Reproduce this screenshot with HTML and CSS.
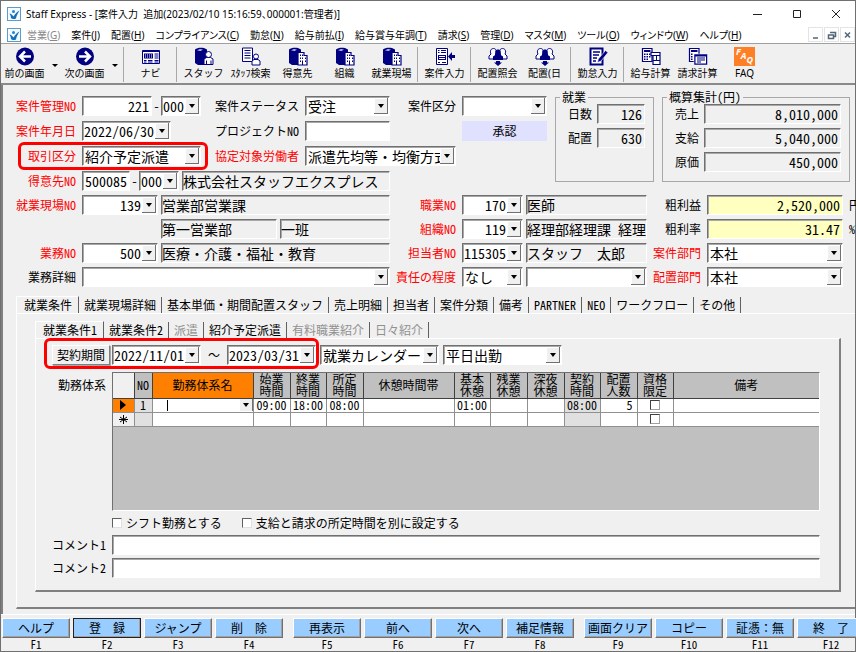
FILE: index.html
```html
<!DOCTYPE html>
<html lang="ja">
<head>
<meta charset="utf-8">
<title>Staff Express</title>
<link rel="stylesheet" href="styles.css">
</head>
<body>
<svg class="defs" aria-hidden="true">
  <symbol id="logo" viewBox="0 0 14 14"><rect x=".5" y=".5" width="13" height="13" fill="#f4fafe" stroke="#5a9ccc"/><path d="M2.500 6.500C4 6.500 5.500 8 6.500 9.500 8 7 9.500 5 12.500 3.500 10.500 6.500 9.500 9 9 11.500 7 12.500 5 12 4 11 4 9.500 3.500 8 2.500 6.500z" fill="#1470b8"/><circle cx="6.500" cy="4.500" r="1.500" fill="#1f86cf"/></symbol>
  <symbol id="book" viewBox="0 0 20 19"><path d="M1 2.500C3 .5 7 .3 10 1l3 1.500V18H4L1 16z"/><path d="M3 3.300 6 2.300 9 2.800 6.500 3.800z" fill="#fff"/></symbol>
  <symbol id="building" viewBox="0 0 20 19"><use href="#book"/><path d="M10 5.500h6v3h3v9.500H10z" fill="#fff" stroke="#000080" stroke-width="1.200"/><path d="M12 7.500h1v1.500h-1zm2 0h1v1.500h-1zm-2 3h1v1.500h-1zm2 0h1v1.500h-1zm-2 3h1v1.500h-1zm2 0h1V18h-1zM17 10.500h1v1.500h-1zm0 3h1v1.500h-1z"/></symbol>
  <symbol id="group" viewBox="0 0 20 19"><g fill="#fff" stroke="#000080"><path d="M1 12V9l2-2C1.500 4 3 1.500 5.500 1.500S9 4 7.500 7v5zM19 12V9l-2-2c1.500-3 0-5.500-2.500-5.500S11 4 12.500 7v5z"/></g><path d="M5 13V9.500l3-2C6.500 5 7.500 2.500 10 2.500S13.500 5 12 7.500l3 2V13zM8 14h4v1.500h2L10 19l-4-3.500h2z"/></symbol>
</svg>
<div class="window">
  <header class="titlebar">
    <svg class="logo"><use href="#logo"/></svg>
    <h1>Staff Express - [案件入力&nbsp; 追加(2023/02/10 15:16:59、000001:管理者)]</h1>
    <div class="winbtns">
      <button aria-label="最小化"><svg viewBox="0 0 10 10"><path d="M0 5.500h9"/></svg></button>
      <button aria-label="最大化"><svg viewBox="0 0 10 10"><path d="M1.500 1.500h7v7h-7z"/></svg></button>
      <button aria-label="閉じる"><svg viewBox="0 0 10 10"><path d="M1 1l8 8M9 1l-8 8"/></svg></button>
    </div>
  </header>
  <nav class="menubar">
    <svg class="logo"><use href="#logo"/></svg>
    <a href="#" class="off">営業(<u>G</u>)</a><a href="#">案件(<u>J</u>)</a><a href="#">配置(<u>H</u>)</a><a href="#">コンプライアンス(<u>C</u>)</a><a href="#">勤怠(<u>N</u>)</a><a href="#">給与前払(<u>I</u>)</a><a href="#">給与賞与年調(<u>T</u>)</a><a href="#">請求(<u>S</u>)</a><a href="#">管理(<u>D</u>)</a><a href="#">マスタ(<u>M</u>)</a><a href="#">ツール(<u>O</u>)</a><a href="#">ウィンドウ(<u>W</u>)</a><a href="#">ヘルプ(<u>H</u>)</a>
    <div class="mdi">
      <button aria-label="子画面を最小化"><svg viewBox="0 0 10 10"><path d="M2 8h5"/></svg></button>
      <button aria-label="子画面を元に戻す"><svg viewBox="0 0 10 10"><path d="M3 2.500h5.500v4H7M1.500 5h5v3.500h-5z"/></svg></button>
      <button aria-label="子画面を閉じる"><svg viewBox="0 0 10 10"><path d="M2 2.500l5 5M7 2.500l-5 5"/></svg></button>
    </div>
  </nav>
  <div class="toolbar">
    <button class="tool"><svg viewBox="0 0 20 19"><circle cx="10" cy="9.500" r="9"/><path class="w" d="M10 4.500l-5 5 5 5M5.500 9.500H16"/></svg>前の画面</button>
    <button class="more" aria-label="前の画面の履歴"></button>
    <button class="tool"><svg viewBox="0 0 20 19"><circle cx="10" cy="9.500" r="9"/><path class="w" d="M10 4.500l5 5-5 5M14.500 9.500H4"/></svg>次の画面</button>
    <button class="more" aria-label="次の画面の履歴"></button>
    <i class="sep"></i>
    <button class="tool"><svg viewBox="0 0 20 19"><path d="M1.500 3.500h17v13h-17z" fill="#fff" stroke="#000080"/><path d="M2 4h16v1H2z"/><path d="M3 6.500h9v5H3z"/><path d="M4 8h7M4 10h7" stroke="#fff" stroke-dasharray="1 1"/><path d="M13.500 7h4M13.500 9h4M13.500 11h4M3 13.500h2.500M7 13.500h4.500M13.500 13.500h4M3 15h2.500M7 15h4.500M13.500 15h4" stroke="#000080"/></svg>ナビ</button>
    <i class="sep"></i>
    <button class="tool"><svg viewBox="0 0 20 19"><use href="#book"/><g fill="#fff" stroke="#000080"><path d="M10 17.500V12l2.500-1.500h4L19 12v5.500z"/><circle cx="14.500" cy="7.500" r="3"/></g><path d="M12 13.500h1v4h-1zM16.500 13.500h1v4h-1z"/></svg>スタッフ</button>
    <button class="tool"><svg viewBox="0 0 20 19"><g fill="#fff" stroke="#000080"><path d="M1.500 1h10v13.500h-10z"/><path d="M3.500 3.500h6M3.500 6h6M3.500 8.500h6M3.500 11h6"/><path d="M11 18v-4l2-1.500h4l2 1.500v4z"/><circle cx="15" cy="9.500" r="2.500"/></g></svg>ｽﾀｯﾌ検索</button>
    <button class="tool"><svg viewBox="0 0 20 19"><use href="#building"/></svg>得意先</button>
    <button class="tool"><svg viewBox="0 0 20 19"><use href="#building"/></svg>組織</button>
    <button class="tool"><svg viewBox="0 0 20 19"><use href="#building"/></svg>就業現場</button>
    <i class="sep"></i>
    <button class="tool"><svg viewBox="0 0 20 19"><path d="M1.500 1.500h11v16h-11z" fill="#fff" stroke="#000080"/><path d="M3 3h1.500v1H3zm3 0h5v1H6zM3 5h1.500v1H3zm3 0h5v1H6zM3 8h8v5H3zM3 15h2v1H3zm4 0h4v1H7zM13 9.500 17 5v3h3v3h-3v3z"/><path d="M4 9.500h6M4 11.500h6" stroke="#fff"/></svg>案件入力</button>
    <i class="sep"></i>
    <button class="tool"><svg viewBox="0 0 20 19"><use href="#group"/></svg>配置照会</button>
    <button class="tool"><svg viewBox="0 0 20 19"><use href="#group"/></svg>配置(日</button>
    <i class="sep"></i>
    <button class="tool"><svg viewBox="0 0 20 19"><path d="M2.500 1.500h12v16h-12z" fill="#fff" stroke="#000080" stroke-width="2"/><path d="M5 5h7M5 8h6M5 11h4M5 14h3" stroke="#000080" stroke-width="1.500"/><path d="M17.500 3.500 20 5.500 13 14l-3.500 1.500.8-3.500z" stroke="#fff" stroke-width=".6"/></svg>勤怠入力</button>
    <i class="sep"></i>
    <button class="tool"><svg viewBox="0 0 20 19"><path d="M1.500 1.500h9.500v13h-9.500z" fill="#fff" stroke="#000080" stroke-width="1.200"/><path d="M3 3h6.500v2H3zM3 6.500h1.500V8H3zm2.500 0H7V8H5.500zm2.500 0h1.500V8H8zM3 9h1.500v1.500H3zm2.500 0H7v1.500H5.500zm2.500 0h1.500v1.500H8zM3 11.500h1.500V13H3zm2.500 0H7V13H5.500z"/><path d="M10 5.500h9v12h-7v-9h-2z" fill="#fff" stroke="#000080" stroke-width="1.200"/><path d="M12 8.500h7M15.500 8.500v5M12 13.500h7" stroke="#000080"/></svg>給与計算</button>
    <button class="tool"><svg viewBox="0 0 20 19"><path d="M1.500 1.500h9.500v13h-9.500z" fill="#fff" stroke="#000080" stroke-width="1.200"/><path d="M3 3h6.500v2H3zM3 6.500h1.500V8H3zM3 9h1.500v1.500H3zM3 11.500h1.500V13H3z"/><path d="M6 7h13.500v11H6z" stroke="#fff" stroke-width=".5"/><path d="M7.500 9.500h10.500v7H7.500z" fill="#fff"/><path d="M9 11h8M9 13h8M9 15h4" stroke="#000080"/></svg>請求計算</button>
    <button class="tool faq"><span class="faqicon"><b>F</b><b>A</b><b>Q</b></span>FAQ</button>
  </div>

  <main>
    <form class="top">
      <div class="rows">
        <label class="req" for="no">案件管理NO</label>
        <div class="fields"><input id="no" class="num grow" value="221"><span class="dash">-</span><span class="combo w40"><input aria-label="枝番" value="000"><button type="button" aria-label="開く"></button></span></div>
        <label for="status">案件ステータス</label>
        <select id="status"><option>受注</option></select>
        <label for="kbn">案件区分</label>
        <select id="kbn"><option></option></select>

        <label class="req" for="date">案件年月日</label>
        <div class="fields"><span class="combo w88"><input id="date" value="2022/06/30"><button type="button" aria-label="開く"></button></span></div>
        <label for="proj">プロジェクトNO</label>
        <input id="proj">
        <button type="button" class="approve">承認</button>

        <label class="req" for="tori">取引区分</label>
        <select id="tori"><option>紹介予定派遣</option></select>
        <label class="req" for="kyotei">協定対象労働者</label>
        <select id="kyotei" class="span2"><option>派遣先均等・均衡方式</option></select>

        <label class="req newrow" for="cust">得意先NO</label>
        <div class="fields span3"><input id="cust" class="w48" value="500085"><span class="dash">-</span><span class="combo w40"><input aria-label="得意先枝番" value="000"><button type="button" aria-label="開く"></button></span><input class="ro grow gapl" readonly aria-label="得意先名" value="株式会社スタッフエクスプレス"></div>
        <span class="mark mark-type"></span>
      </div>
      <fieldset class="work">
        <legend>就業</legend>
        <label for="days">日数</label><input id="days" class="ro num" readonly value="126">
        <label for="haichi">配置</label><input id="haichi" class="ro num" readonly value="630">
      </fieldset>
      <fieldset class="total">
        <legend>概算集計(円)</legend>
        <label for="sales">売上</label><input id="sales" class="ro num" readonly value="8,010,000">
        <label for="pay">支給</label><input id="pay" class="ro num" readonly value="5,040,000">
        <label for="cost">原価</label><input id="cost" class="ro num" readonly value="450,000">
      </fieldset>
    </form>

    <form class="detail">
      <label class="req" for="site">就業現場NO</label>
      <div class="fields"><span class="combo w76"><input id="site" class="num" value="139"><button type="button" aria-label="開く"></button></span><input class="ro grow gapl" readonly aria-label="就業現場名" value="営業部営業課"></div>
      <label class="req" for="job">職業NO</label>
      <div class="fields"><span class="combo w61"><input id="job" class="num" value="170"><button type="button" aria-label="開く"></button></span><input class="ro grow gapl" readonly aria-label="職業名" value="医師"></div>
      <label for="profit">粗利益</label><input id="profit" class="num yellow" value="2,520,000"><span class="unit">円</span>

      <div class="fields dept"><input class="ro w116" readonly aria-label="部署" value="第一営業部"><input class="ro grow gapl" readonly aria-label="班" value="一班"></div>
      <label class="req" for="org">組織NO</label>
      <div class="fields"><span class="combo w61"><input id="org" class="num" value="119"><button type="button" aria-label="開く"></button></span><input class="ro grow gapl" readonly aria-label="組織名" value="経理部経理課 経理"></div>
      <label for="rate">粗利率</label><input id="rate" class="num yellow" value="31.47"><span class="unit">%</span>

      <label class="req" for="task">業務NO</label>
      <div class="fields"><span class="combo w76"><input id="task" class="num" value="500"><button type="button" aria-label="開く"></button></span><input class="ro grow gapl" readonly aria-label="業務名" value="医療・介護・福祉・教育"></div>
      <label class="req" for="staff">担当者NO</label>
      <div class="fields"><span class="combo w61"><input id="staff" class="num" value="115305"><button type="button" aria-label="開く"></button></span><input class="ro grow gapl" readonly aria-label="担当者名" value="スタッフ&nbsp;&nbsp;太郎"></div>
      <label class="req" for="bumon">案件部門</label><select id="bumon"><option>本社</option></select>

      <label class="newrow" for="taskd">業務詳細</label>
      <select id="taskd"><option></option></select>
      <label class="req" for="resp">責任の程度</label>
      <div class="fields"><select id="resp" class="w61"><option>なし</option></select><select class="grow gapl" aria-label="責任の内容"><option></option></select></div>
      <label class="req" for="hbumon">配置部門</label><select id="hbumon"><option>本社</option></select>
    </form>

    <section class="tabs outer">
      <div class="strip" role="tablist"><button role="tab" aria-selected="true">就業条件</button><button role="tab">就業現場詳細</button><button role="tab">基本単価・期間配置スタッフ</button><button role="tab">売上明細</button><button role="tab">担当者</button><button role="tab">案件分類</button><button role="tab">備考</button><button role="tab">PARTNER</button><button role="tab">NEO</button><button role="tab">ワークフロー</button><button role="tab">その他</button></div>
      <div class="page">
        <section class="tabs inner">
          <div class="strip" role="tablist"><button role="tab" aria-selected="true">就業条件1</button><button role="tab">就業条件2</button><button role="tab" disabled>派遣</button><button role="tab">紹介予定派遣</button><button role="tab" disabled>有料職業紹介</button><button role="tab" disabled>日々紹介</button></div>
          <div class="page">
            <div class="period">
              <button type="button" class="raised">契約期間</button>
              <span class="combo w88"><input aria-label="開始日" value="2022/11/01"><button type="button" aria-label="開く"></button></span>
              <span class="tilde">～</span>
              <span class="combo w88"><input aria-label="終了日" value="2023/03/31"><button type="button" aria-label="開く"></button></span>
              <select class="cal" aria-label="カレンダー"><option>就業カレンダー</option></select>
              <select class="cal" aria-label="出勤区分"><option>平日出勤</option></select>
              <span class="mark mark-period"></span>
            </div>
            <div class="body">
              <span class="lbl gridlbl">勤務体系</span>
              <div class="sheet">
                <table>
                  <colgroup><col class="c21"><col class="c18"><col class="c101"><col class="c37"><col class="c36"><col class="c37"><col class="c91"><col class="c36"><col class="c37"><col class="c37"><col class="c36"><col class="c37"><col class="c36"><col></colgroup>
                  <thead><tr><th class="corner"></th><th>NO</th><th class="hot">勤務体系名</th><th>始業<br>時間</th><th>終業<br>時間</th><th>所定<br>時間</th><th>休憩時間帯</th><th>基本<br>休憩</th><th>残業<br>休憩</th><th>深夜<br>休憩</th><th>契約<br>時間</th><th>配置<br>人数</th><th>資格<br>限定</th><th>備考</th></tr></thead>
                  <tbody>
                    <tr><td class="head hot"><svg viewBox="0 0 6 10"><path d="M0 0l6 5-6 5z"/></svg></td><td class="no">1</td><td class="edit"><span class="caret"></span><button type="button" aria-label="開く"></button></td><td>09:00</td><td>18:00</td><td>08:00</td><td></td><td>01:00</td><td></td><td></td><td class="no">08:00</td><td class="r">5</td><td><input type="checkbox" aria-label="資格限定 1"></td><td></td></tr>
                    <tr><td class="head"><svg class="star" viewBox="0 0 9 9"><path d="M4.500 0v9M1 2l7 5M8 2l-7 5M0 4.500h9"/></svg></td><td class="no"></td><td></td><td></td><td></td><td></td><td></td><td></td><td></td><td></td><td class="no"></td><td></td><td><input type="checkbox" aria-label="資格限定 2"></td><td></td></tr>
                  </tbody>
                </table>
              </div>
              <div class="checks"><label><input type="checkbox">シフト勤務とする</label><label><input type="checkbox">支給と請求の所定時間を別に設定する</label></div>
              <label for="c1">コメント1</label><input id="c1">
              <label for="c2">コメント2</label><input id="c2">
            </div>
          </div>
        </section>
      </div>
    </section>
  </main>

  <footer>
    <div class="keys">
      <div class="key"><button>ヘルプ</button>F1</div><div class="key"><button class="def">登　録</button>F2</div><div class="key"><button>ジャンプ</button>F3</div><div class="key"><button>削　除</button>F4</div>
    </div>
    <div class="keys">
      <div class="key"><button>再表示</button>F5</div><div class="key"><button>前へ</button>F6</div><div class="key"><button>次へ</button>F7</div><div class="key"><button>補足情報</button>F8</div>
    </div>
    <div class="keys">
      <div class="key"><button>画面クリア</button>F9</div><div class="key"><button>コピー</button>F10</div><div class="key"><button>証憑：無</button>F11</div><div class="key"><button>終　了</button>F12</div>
    </div>
  </footer>
</div>
</body>
</html>
```
FILE: styles.css
```css
:root {
  --face: #f0f0f0;
  --shadow: #808080;
  --navy: #000080;
  --red: #ff0000;
  --drop: url("data:image/svg+xml,%3Csvg xmlns='http://www.w3.org/2000/svg' width='14' height='16'%3E%3Cpath fill='%23f0f0f0' d='M0 0h14v16H0z'/%3E%3Cpath fill='%23fff' d='M0 0h13v1H1v14H0z'/%3E%3Cpath fill='%23707070' d='M13 0h1v16H0v-1h13z'/%3E%3Cpath d='M4 6h6L7 10z'/%3E%3C/svg%3E");
}
* { box-sizing: border-box; }
html, body { height: 100%; }
body {
  margin: 0;
  overflow: hidden;
  background: var(--face);
  color: #000;
  font: 12px/16px "Noto Sans CJK JP", sans-serif;
}
button, input, select {
  margin: 0;
  padding: 0;
  border: 0;
  border-radius: 0;
  background: none;
  color: inherit;
  font: inherit;
  appearance: none;
}
.defs { position: absolute; width: 0; height: 0; }
.window {
  display: flex;
  flex-direction: column;
  min-height: 100%;
  border: 1px solid #707070;
}

/* title and menu */
.titlebar, .menubar {
  display: flex;
  align-items: center;
  background: #fff;
  padding-left: 6px;
  font: 10px/16px "Noto Sans", "Noto Sans CJK JP", sans-serif;
}
.titlebar { height: 25px; }
.menubar { height: 18px; border-bottom: 1px solid #a0a0a0; gap: 11px; }
.logo { width: 14px; height: 14px; flex: none; }
h1 { margin: 0 0 0 5px; font: inherit; white-space: nowrap; font-feature-settings: "palt"; }
.winbtns { display: flex; gap: 29px; margin-left: auto; margin-right: 14px; }
.winbtns button, .winbtns svg { width: 10px; height: 10px; display: block; }
.winbtns svg, .mdi svg { fill: none; stroke: #222; stroke-width: 1; }
.menubar .logo { margin-right: -5px; }
.menubar a {
  color: #000;
  text-decoration: none;
  white-space: nowrap;
  font-feature-settings: "palt";
}
.menubar .off { color: #888; }
.mdi { display: flex; gap: 1px; margin-left: auto; }
.mdi button { width: 15px; height: 15px; border: 1px solid #e4e4e4; display: grid; place-items: center; }
.mdi svg { width: 10px; height: 10px; stroke: #567; stroke-width: 1.5; }

/* toolbar */
.toolbar {
  display: flex;
  height: 41px;
  padding-top: 3px;
  border-bottom: 2px solid #8a8a8a;
  font: 10px/14px "Noto Sans", "Noto Sans CJK JP", sans-serif;
}
.tool {
  display: flex;
  flex-direction: column;
  align-items: center;
  flex: 0 0 47px;
  white-space: nowrap;
  line-height: 14px;
}
.tool svg { width: 20px; height: 19px; fill: var(--navy); }
.tool .w { fill: none; stroke: #fff; stroke-width: 2.5; }
.more { flex: 0 0 13px; }
.more::after {
  content: "";
  display: block;
  margin: 0 auto;
  width: 0;
  border: 3px solid transparent;
  border-top-color: #000;
  border-bottom: 0;
}
.sep { flex: 0 0 1px; margin: 0 3px 1px 2px; background: #a8a8a8; }
.faqicon {
  display: flex;
  justify-content: center;
  width: 21px;
  height: 19px;
  background: #ff7f27;
  color: #fff;
  font-size: 9px;
  font-style: italic;
  line-height: 10px;
}
.faqicon b:nth-child(2) { padding-top: 4px; }
.faqicon b:nth-child(3) { padding-top: 8px; }

/* form */
main { font-feature-settings: "hwid"; }
main {
  flex: 1;
  border-left: 2px solid var(--shadow);
  padding-top: 5px;
}
label, .lbl { text-align: right; white-space: nowrap; }
.req { color: var(--red); }
main input:not([type="checkbox"]), select, .combo {
  height: 20px;
  min-width: 0;
  background-color: #fff;
  border: 1px solid;
  border-color: #707070 #fff #fff #707070;
  box-shadow: inset 1px 1px 0 #a8a8a8;
  font-size: 14px;
  line-height: 18px;
  padding: 0 2px;
}
main input.ro { background: var(--face); padding: 0; }
main input.num { text-align: right; padding-right: 2px; }
main input.yellow { background: #ffffc0; }
select {
  background-image: var(--drop);
  background-repeat: no-repeat;
  background-position: right 1px center;
  padding: 0 15px 0 2px;
  overflow: hidden;
}
.combo { display: flex; flex: none; padding: 1px 1px 1px 0; }
main .combo input { flex: 1; width: 0; height: 16px; border: 0; box-shadow: none; background: none; line-height: 16px; padding: 0 1px; }
.combo button, .edit button { flex: none; width: 14px; height: 16px; background: var(--drop) center; }
.fields { display: flex; min-width: 0; }
.grow { flex: 1; width: 0; }
.gapl { margin-left: 3px; }
.dash { flex: 0 0 9px; text-align: center; line-height: 20px; }
.w40 { width: 40px; }
.w48 { width: 48px; }
.w61 { width: 61px; }
.w76 { width: 76px; }
.w88 { width: 89px; }
.w116 { width: 116px; }

.top { display: flex; align-items: flex-start; }
.rows {
  position: relative;
  display: grid;
  grid-template-columns: 73px 119px 92px 85px 60px 85px;
  grid-auto-rows: 20px;
  align-items: center;
  gap: 5px 6px;
  padding-top: 6px;
  margin-right: 8px;
}
.approve { grid-column: 6; height: 20px; background: #e0e0ff; }
.span2 { grid-column: 4 / 6; }
.newrow { grid-column: 1; }
.span3 { grid-column: 2 / 5; }
fieldset {
  display: grid;
  grid-auto-rows: 20px;
  align-items: center;
  gap: 4px 5px;
  margin: 0 8px 0 0;
  border: 1px solid #a8a8a8;
  height: 92px;
  padding: 0 8px 0 12px;
}
legend { padding: 0 2px; margin-left: -8px; line-height: 14px; }
.work { width: 99px; grid-template-columns: 24px 48px; align-content: start; }
.total { width: 190px; grid-template-columns: 24px 137px; align-content: start; }

.detail {
  display: grid;
  grid-template-columns: 73px 308px 60px 185px 48px 136px 12px;
  grid-auto-rows: 20px;
  align-items: center;
  gap: 4px 6px;
  margin-top: 4px;
}
.dept { grid-column: 2; padding-left: 79px; }

/* tabs */
.strip { display: flex; align-items: flex-end; }
.strip button {
  height: 16px;
  padding: 0 5px;
  border-right: 1px solid #606060;
  line-height: 16px;
  white-space: nowrap;
}
.strip button:disabled { color: #909090; }
.strip [aria-selected] {
  height: 17px;
  padding: 0 6px 0 7px;
  border-left: 1px solid #fff;
  border-top: 1px solid #fff;
}
.page { border-top: 1px solid #fff; border-left: 1px solid #fff; border-bottom: 2px solid var(--shadow); }
.outer { margin: 9px 0 0 13px; }
.outer > .page { padding: 7px 14px 15px 18px; }
.inner > .page { border-right: 2px solid var(--shadow); padding: 6px 19px 12px 0; }
.period {
  position: relative;
  display: flex;
  padding-left: 16px;
}
.raised {
  width: 58px;
  height: 20px;
  border: 1px solid;
  border-color: #fff #808080 #808080 #fff;
  box-shadow: 1px 1px 0 #a8a8a8;
  margin-right: 2px;
}
.tilde { width: 26px; text-align: center; line-height: 20px; font-feature-settings: normal; }
.cal { width: 119px; margin-left: 4px; }
.mark {
  position: absolute;
  border: 3px solid var(--red);
  border-radius: 6px;
  pointer-events: none;
}
.mark-type { left: 15px; top: 52px; width: 190px; height: 28px; }
.mark-period { left: 8px; top: -7px; width: 275px; height: 31px; }
.body {
  display: grid;
  grid-template-columns: 70px 1fr;
  gap: 3px 6px;
  margin-top: 7px;
  align-items: center;
}
.gridlbl { align-self: start; margin-top: 5px; }
.sheet { height: 139px; background: #c0c0c0; border: 1px solid #707070; border-color: #707070 #fff #fff #707070; }
table { width: 100%; border-collapse: collapse; table-layout: fixed; line-height: 12px; }
.c18 { width: 18px; }
.c21 { width: 21px; }
.c36 { width: 36px; }
.c37 { width: 37px; }
.c91 { width: 91px; }
.c101 { width: 101px; }
th {
  height: 25px;
  padding: 0;
  background: #c0c0c0;
  border: 1px solid #404040;
  border-top: 0;
  font-weight: 400;
}
td { height: 14px; padding: 0; background: #fff; border: 1px solid #909090; text-align: center; }
th:first-child, td:first-child { border-left: 0; }
th:last-child, td:last-child { border-right: 0; }
.corner, td.head { background: var(--face); }
th.hot, td.hot { background: #ff8000; }
td.no { background: #e0e0e0; }
td.r { text-align: right; padding-right: 4px; }
td svg { display: block; margin: 0 auto; width: 6px; height: 10px; }
td .star { width: 9px; height: 9px; stroke: #000; stroke-width: 1; }
td.edit > * { vertical-align: top; }
td.edit { text-align: right; }
.caret { float: left; width: 1px; height: 11px; margin: 1px 0 0 14px; background: #000; }
td.edit button { height: 12px; }
input[type="checkbox"] {
  width: 10px;
  height: 10px;
  background: #fff;
  border: 1px solid;
  border-color: #606060 #e0e0e0 #e0e0e0 #606060;
}
td input[type="checkbox"] { display: block; margin: 0 auto; border-color: #404040 #a0a0a0 #a0a0a0 #404040; }
.checks { grid-column: 2; display: flex; gap: 20px; height: 18px; align-items: center; }
.checks label { display: flex; align-items: center; gap: 4px; }

/* function keys */
footer {
  display: flex;
  gap: 10px;
  padding: 3px 0 0 1px;
  border-top: 1px solid #fff;
  height: 37px;
}
.keys { display: flex; gap: 3px; }
.key { width: 68px; text-align: center; font-size: 11px; line-height: 12px; font-feature-settings: "hwid"; }
.key button {
  display: block;
  width: 68px;
  height: 20px;
  background: #99ccff;
  border: 1px solid;
  border-color: #fff #707070 #707070 #fff;
  box-shadow: inset -1px -1px 0 #a0a0a0;
  font-size: 12px;
  font-feature-settings: normal;
}
.key .def { border-color: #222; }
```
